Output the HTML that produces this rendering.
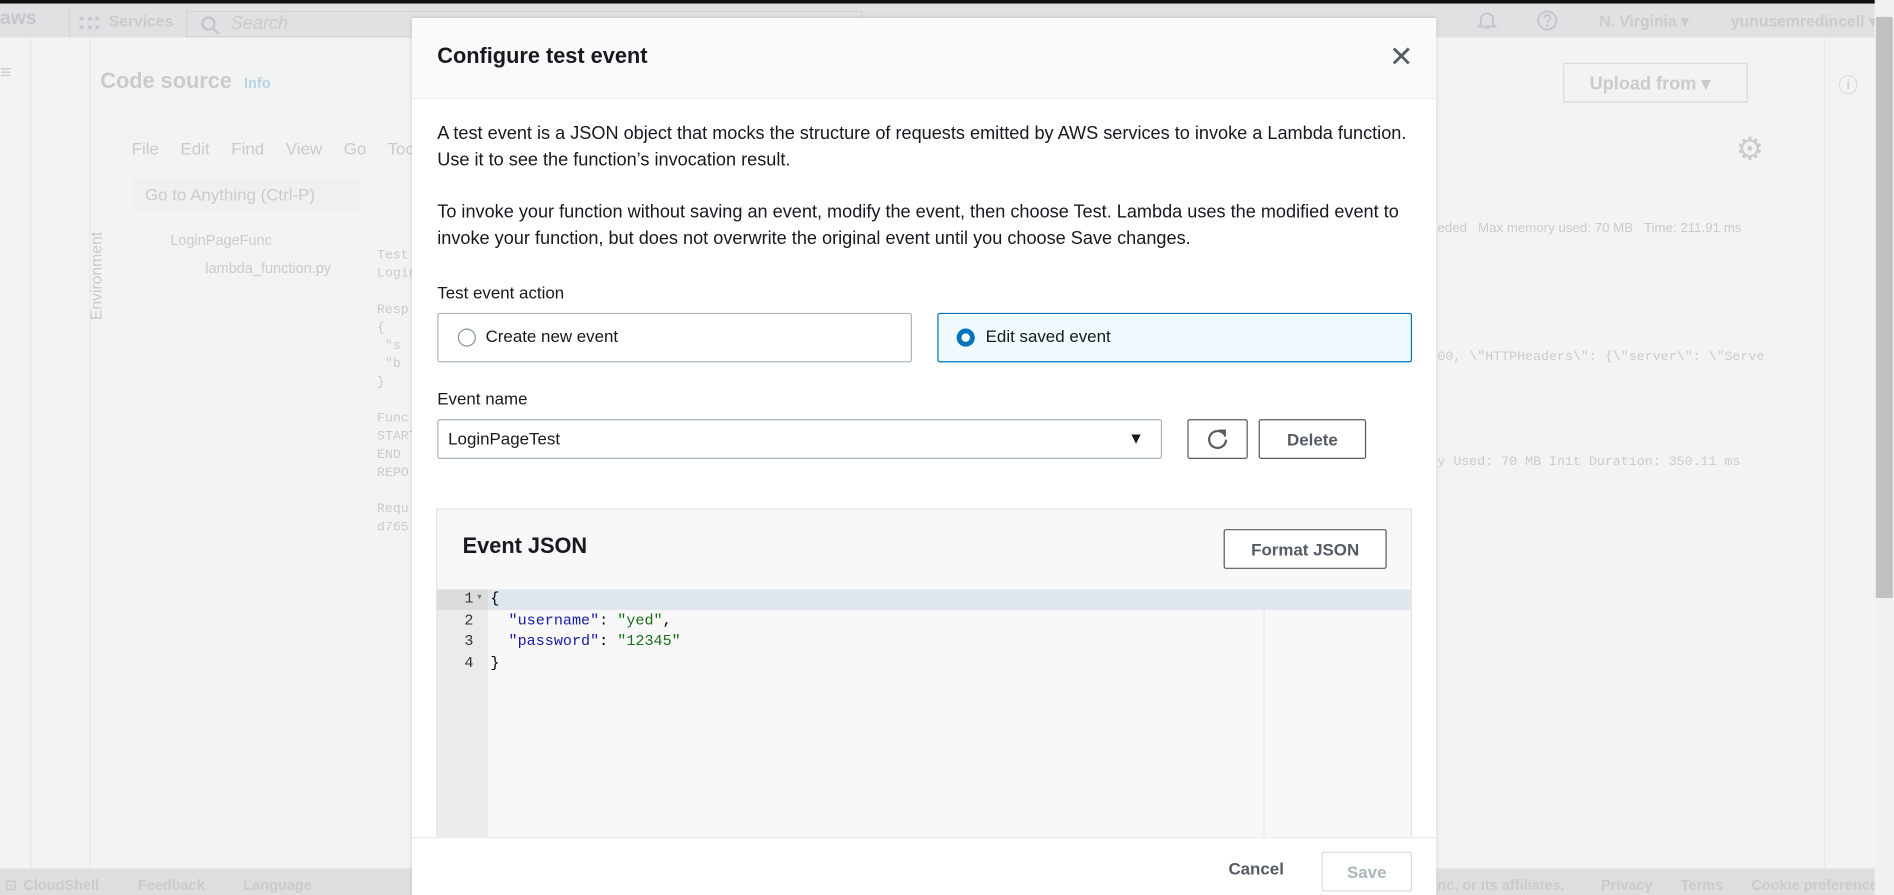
<!DOCTYPE html>
<html><head><meta charset="utf-8"><style>
*{box-sizing:border-box;margin:0;padding:0}
body{width:1894px;height:895px;overflow:hidden;background:#f2f3f3;font-family:"Liberation Sans",sans-serif}
#w{position:absolute;left:0;top:0;width:1568px;height:741px;transform:scale(1.20791);transform-origin:0 0;background:#f2f3f3;overflow:hidden}
.a{position:absolute;white-space:nowrap}
.g{color:#c9cccd}
.m{font-family:"Liberation Mono",monospace}
.btn{position:absolute;border:1px solid #545b64;border-radius:2px;background:#fff;font-weight:bold;font-size:14px;color:#545b64;display:flex;align-items:center;justify-content:center}
</style></head><body><div id="w">
<div class="a" style="left:0;top:0;width:1568px;height:3px;background:#111"></div>
<div class="a" style="left:0;top:3px;width:1552px;height:28px;background:#dfe1e2"></div>
<div class="a g" style="left:0;top:7px;font-size:16px;font-weight:bold;color:#c5c8ca">aws</div>
<div class="a" style="left:57px;top:3px;width:1px;height:28px;background:#d4d6d7"></div>
<div class="a g" style="left:66px;top:14px;width:16px;height:10px;border-top:3px dotted #c5c8ca;border-bottom:3px dotted #c5c8ca"></div>
<div class="a g" style="left:90px;top:10px;font-size:13px;font-weight:bold">Services</div>
<div class="a" style="left:154px;top:9px;width:560px;height:22px;border:1px solid #d2d4d5"></div>
<svg class="a" style="left:166px;top:13px" width="16" height="16" viewBox="0 0 16 16"><circle cx="6.5" cy="6.5" r="5" fill="none" stroke="#c5c8ca" stroke-width="2"/><path d="M10 10l5 5" stroke="#c5c8ca" stroke-width="2"/></svg>
<div class="a g" style="left:191px;top:11px;font-size:15px;font-style:italic">Search</div>
<svg class="a" style="left:1222px;top:9px" width="18" height="16" viewBox="0 0 18 16"><path d="M4 11V7a5 5 0 0 1 10 0v4l2 2H2z M7 14h4" fill="none" stroke="#c5c8ca" stroke-width="1.6"/></svg>
<svg class="a" style="left:1272px;top:8px" width="18" height="18" viewBox="0 0 18 18"><circle cx="9" cy="9" r="7.5" fill="none" stroke="#c5c8ca" stroke-width="1.6"/><path d="M6.5 7a2.5 2.5 0 1 1 3.5 2.3c-.7.3-1 .8-1 1.5" fill="none" stroke="#c5c8ca" stroke-width="1.6"/><circle cx="9" cy="13.3" r="1" fill="#c5c8ca"/></svg>
<div class="a g" style="left:1324px;top:10px;font-size:13px;font-weight:bold">N. Virginia ▾</div>
<div class="a g" style="left:1433px;top:10px;font-size:13px;font-weight:bold">yunusemredincell ▾</div>
<div class="a" style="left:25px;top:31px;width:1px;height:688px;background:#e6e8e9"></div>
<div class="a" style="left:74px;top:31px;width:1px;height:688px;background:#e6e8e9"></div>
<div class="a" style="left:1510px;top:31px;width:1px;height:688px;background:#e6e8e9"></div>
<div class="a g" style="left:0;top:52px;font-size:16px">≡</div>
<div class="a g" style="left:83px;top:57px;font-size:18px;font-weight:bold">Code source</div>
<div class="a" style="left:202px;top:62px;font-size:12px;font-weight:bold;color:#b9d2e6">Info</div>
<div class="a" style="left:1294px;top:52px;width:153px;height:33px;border:1px solid #d9dbdc"></div>
<div class="a g" style="left:1316px;top:60px;font-size:15px;font-weight:bold">Upload from ▾</div>
<div class="a g" style="left:1522px;top:57px;font-size:16px">ⓘ</div>
<div class="a g" style="left:109px;top:115px;font-size:14px;word-spacing:14px">File Edit Find View Go Too</div>
<div class="a g" style="left:1437px;top:108px;font-size:26px">⚙</div>
<div class="a" style="left:110px;top:148px;width:188px;height:26px;background:#eff0f0"></div>
<div class="a g" style="left:120px;top:153px;font-size:14px">Go to Anything (Ctrl-P)</div>
<div class="a g" style="left:141px;top:192px;font-size:12px">LoginPageFunc</div>
<div class="a g" style="left:170px;top:215px;font-size:12px">lambda_function.py</div>
<div class="a g" style="left:72px;top:265px;font-size:13px;transform:rotate(-90deg);transform-origin:0 0">Environment</div>
<div class="a m g" style="left:312px;top:205px;font-size:11px;line-height:15px">Test<br>Login<br><br>Resp<br>{<br>&nbsp;"s<br>&nbsp;"b<br>}<br><br>Func<br>START<br>END<br>REPO<br><br>Requ<br>d765</div>
<div class="a g" style="left:1190px;top:183px;font-size:11px">eded &nbsp; Max memory used: 70 MB &nbsp; Time: 211.91 ms</div>
<div class="a m g" style="left:1190px;top:290px;font-size:11px">00, \"HTTPHeaders\": {\"server\": \"Serve</div>
<div class="a m g" style="left:1190px;top:377px;font-size:11px">y Used: 70 MB  Init Duration: 350.11 ms</div>
<div class="a" style="left:0;top:719px;width:1552px;height:22px;background:#dcdedf"></div>
<div class="a g" style="left:4px;top:726px;font-size:12px;font-weight:bold;word-spacing:2px">⊡ CloudShell &nbsp;&nbsp;&nbsp;&nbsp; Feedback &nbsp;&nbsp;&nbsp;&nbsp; Language</div>
<div class="a g" style="left:1190px;top:726px;font-size:12px;font-weight:bold">nc. or its affiliates. &nbsp;&nbsp;&nbsp;&nbsp;&nbsp;&nbsp;&nbsp; Privacy &nbsp;&nbsp;&nbsp;&nbsp;&nbsp; Terms &nbsp;&nbsp;&nbsp;&nbsp;&nbsp; Cookie preferences</div>
<div class="a" style="left:1552px;top:0;width:16px;height:741px;background:#f1f1f1"></div>
<div class="a" style="left:1553px;top:14px;width:14px;height:481px;background:#c1c1c1"></div>
<div class="a" style="left:341px;top:15px;width:848px;height:730px;background:#fff;box-shadow:0 0 3px rgba(0,0,0,.2)">
 <div class="a" style="left:0;top:0;width:848px;height:67px;background:#fafafa;border-bottom:1px solid #eaeded"></div>
 <div class="a" style="left:21px;top:21px;font-size:18px;font-weight:bold;color:#16191f">Configure test event</div>
 <div class="a" style="left:809px;top:20px;font-size:24px;color:#545b64;line-height:26px">✕</div>
 <div class="a" style="left:21px;top:85px;font-size:15px;line-height:21.5px;color:#16191f">A test event is a JSON object that mocks the structure of requests emitted by AWS services to invoke a Lambda function.<br>Use it to see the function’s invocation result.</div>
 <div class="a" style="left:21px;top:150px;font-size:15px;line-height:21.5px;color:#16191f">To invoke your function without saving an event, modify the event, then choose Test. Lambda uses the modified event to<br>invoke your function, but does not overwrite the original event until you choose Save changes.</div>
 <div class="a" style="left:21px;top:219px;font-size:14px;color:#16191f">Test event action</div>
 <div class="a" style="left:21px;top:244px;width:393px;height:41px;border:1px solid #aab7b8;border-radius:2px"></div>
 <div class="a" style="left:38px;top:257px;width:15px;height:15px;border:1px solid #879596;border-radius:50%"></div>
 <div class="a" style="left:61px;top:255px;font-size:14px;color:#16191f">Create new event</div>
 <div class="a" style="left:435px;top:244px;width:393px;height:41px;border:1px solid #0073bb;border-radius:2px;background:#f1faff"></div>
 <div class="a" style="left:451px;top:257px;width:15px;height:15px;border:4px solid #0073bb;border-radius:50%;background:#fff"></div>
 <div class="a" style="left:475px;top:255px;font-size:14px;color:#16191f">Edit saved event</div>
 <div class="a" style="left:21px;top:307px;font-size:14px;color:#16191f">Event name</div>
 <div class="a" style="left:21px;top:332px;width:600px;height:33px;border:1px solid #aab7b8;border-radius:2px"></div>
 <div class="a" style="left:30px;top:340px;font-size:14px;color:#16191f">LoginPageTest</div>
 <div class="a" style="left:593px;top:340px;font-size:13px;color:#16191f">▼</div>
 <div class="btn" style="left:642px;top:332px;width:50px;height:33px"><svg width="18" height="18" viewBox="0 0 18 18"><path d="M14.5 4.5A7 7 0 1 0 16 9" fill="none" stroke="#545b64" stroke-width="1.8"/><path d="M10 1.5h5v5" fill="none" stroke="#545b64" stroke-width="1.8"/></svg></div>
 <div class="btn" style="left:701px;top:332px;width:89px;height:33px">Delete</div>
 <div class="a" style="left:20px;top:406px;width:808px;height:330px;background:#f8f8f8;border:1px solid #e4e4e4"></div>
 <div class="a" style="left:42px;top:427px;font-size:18px;font-weight:bold;color:#16191f">Event JSON</div>
 <div class="btn" style="left:672px;top:423px;width:135px;height:33px">Format JSON</div>
 <div class="a" style="left:21px;top:473px;width:42px;height:260px;background:#ebebeb"></div>
 <div class="a" style="left:63px;top:473px;width:764px;height:17px;background:#dfe6ee"></div>
 <div class="a" style="left:21px;top:473px;width:42px;height:17px;background:#dcdcdc"></div>
 <div class="a" style="left:705px;top:473px;width:1px;height:260px;background:#e6e6e6"></div>
 <div class="a m" style="left:21px;top:473px;width:30px;text-align:right;font-size:12.5px;line-height:17.5px;color:#333">1<br>2<br>3<br>4</div>
 <div class="a" style="left:53px;top:477px;font-size:6px;color:#777">▼</div>
 <div class="a m" style="left:65px;top:473px;font-size:12.5px;line-height:17.5px;color:#000">{<br>&nbsp;&nbsp;<span style="color:#1a1aa6">"username"</span>: <span style="color:#1a6e1a">"yed"</span>,<br>&nbsp;&nbsp;<span style="color:#1a1aa6">"password"</span>: <span style="color:#1a6e1a">"12345"</span><br>}</div>
 <div class="a" style="left:0;top:678px;width:848px;height:60px;background:#fff;border-top:1px solid #eaeded"></div>
 <div class="a" style="left:676px;top:696px;font-size:14px;font-weight:bold;color:#545b64">Cancel</div>
 <div class="a" style="left:753px;top:690px;width:75px;height:33px;border:1px solid #d5dbdb;border-radius:2px;font-size:14px;font-weight:bold;color:#aab7b8;display:flex;align-items:center;justify-content:center">Save</div>
</div>
</div></body></html>
